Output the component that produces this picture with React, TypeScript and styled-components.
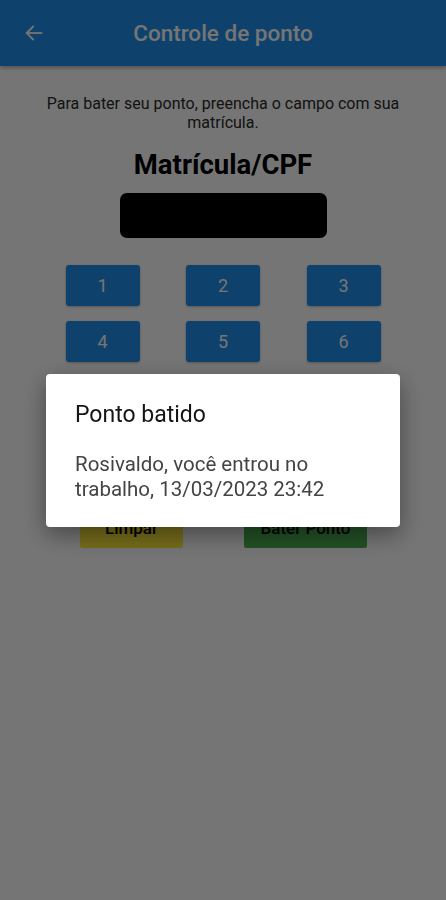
import React from 'react';
import styled, { createGlobalStyle } from 'styled-components';

const GlobalStyle = createGlobalStyle`
  html, body {
    margin: 0;
    padding: 0;
    background: #ffffff;
    font-family: Roboto, 'Noto Sans', sans-serif;
  }
`;

const Screen = styled.div`
  width: 446px;
  height: 900px;
  display: flex;
  flex-direction: column;
  background: #ffffff;
`;

const Header = styled.header`
  height: 66px;
  display: flex;
  align-items: center;
  background: #1f8fea;
  box-shadow: 0 2px 4px rgba(0, 0, 0, 0.3);
`;

const BackButton = styled.div`
  width: 24px;
  height: 24px;
  margin-left: 22px;
  display: flex;
  align-items: center;
  justify-content: center;
`;

const Title = styled.h1`
  flex: 1;
  margin: 0 0 0 -46px;
  text-align: center;
  color: #ffffff;
  font-size: 22.5px;
  font-weight: 500;
`;

const Content = styled.main`
  display: flex;
  flex-direction: column;
  align-items: center;
  padding-top: 28px;
`;

const Hint = styled.p`
  width: 400px;
  margin: 0;
  text-align: center;
  font-size: 16px;
  line-height: 19px;
  color: #2a2a2a;
`;

const Label = styled.h2`
  margin: 16px 0 0;
  font-size: 27.5px;
  line-height: 34px;
  font-weight: 700;
  color: #000;
`;

const Field = styled.div`
  width: 207px;
  height: 45px;
  margin-top: 11px;
  background: #000;
  border-radius: 7px;
`;

const Keypad = styled.div`
  display: grid;
  grid-template-columns: repeat(3, 74px);
  column-gap: 46.5px;
  row-gap: 15px;
  margin-top: 27px;
`;

const Key = styled.button<{ $col?: number }>`
  grid-column: ${(p) => (p.$col ? p.$col : 'auto')};
  height: 41px;
  border: none;
  border-radius: 3px;
  background: #1f8fea;
  color: #fff;
  font-family: Roboto, sans-serif;
  font-size: 18px;
  box-shadow: 0 1px 3px rgba(0, 0, 0, 0.25);
`;

const Actions = styled.div`
  display: flex;
  gap: 61px;
  margin-top: 33px;
  margin-left: 1px;
`;

const ActionButton = styled.button<{ $bg: string; $w: number }>`
  width: ${(p) => p.$w}px;
  height: 41px;
  border: none;
  border-radius: 2px;
  background: ${(p) => p.$bg};
  color: #000;
  font-family: Roboto, sans-serif;
  font-size: 17px;
  font-weight: 500;
`;

const Backdrop = styled.div`
  position: fixed;
  inset: 0;
  background: rgba(0, 0, 0, 0.54);
  display: flex;
  justify-content: center;
  align-items: flex-start;
  padding-top: 374px;
  box-sizing: border-box;
`;

const Dialog = styled.div`
  width: 354px;
  box-sizing: border-box;
  padding: 27px 20px 25px 29px;
  background: #fff;
  border-radius: 4px;
  box-shadow: 0 8px 24px rgba(0, 0, 0, 0.4);
`;

const DialogTitle = styled.h3`
  margin: 0;
  font-size: 23px;
  font-weight: 400;
  color: #151515;
  line-height: 28px;
`;

const DialogText = styled.p`
  margin: 23px 0 0;
  font-size: 20.5px;
  line-height: 25px;
  color: #444;
`;

export default function App() {
  const keys = ['1', '2', '3', '4', '5', '6', '7', '8', '9'];

  return (
    <>
      <GlobalStyle />
      <Screen>
        <Header>
          <BackButton>
            <svg width="22" height="22" viewBox="0 0 24 24" fill="none" stroke="#fff" strokeWidth="2" strokeLinecap="square">
              <path d="M20 12H5" />
              <path d="M11 5l-7 7 7 7" />
            </svg>
          </BackButton>
          <Title>Controle de ponto</Title>
        </Header>
        <Content>
          <Hint>Para bater seu ponto, preencha o campo com sua matrícula.</Hint>
          <Label>Matrícula/CPF</Label>
          <Field />
          <Keypad>
            {keys.map((k) => (
              <Key key={k}>{k}</Key>
            ))}
            <Key $col={2}>0</Key>
          </Keypad>
          <Actions>
            <ActionButton $bg="#ffeb3b" $w={103}>Limpar</ActionButton>
            <ActionButton $bg="#4caf50" $w={123}>Bater Ponto</ActionButton>
          </Actions>
        </Content>
      </Screen>
      <Backdrop>
        <Dialog>
          <DialogTitle>Ponto batido</DialogTitle>
          <DialogText>
            Rosivaldo, você entrou no trabalho, 13/03/2023 23:42
          </DialogText>
        </Dialog>
      </Backdrop>
    </>
  );
}
